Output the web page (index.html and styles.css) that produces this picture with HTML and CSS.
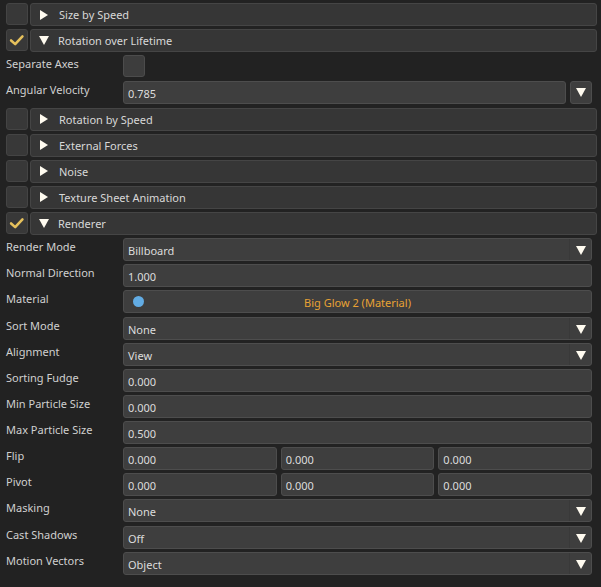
FILE: index.html
```html
<!DOCTYPE html>
<html lang="en">
<head>
    <meta charset="UTF-8">
    <title>Particle System</title>
    <link rel="stylesheet" href="styles.css">
</head>
<body>
    <div class="inspector">
        <div class="module">
            <span class="toggle"></span>
            <div class="module-bar"><span class="arrow-right"></span>Size by Speed</div>
        </div>
        <div class="module">
            <span class="toggle checked"><svg viewBox="0 0 22 22" width="22" height="22"><path d="M4.5 11.5 L9 15.5 L17 7" fill="none" stroke="#e6c15c" stroke-width="2.8" stroke-linecap="round" stroke-linejoin="round"/></svg></span>
            <div class="module-bar"><span class="arrow-down"></span>Rotation over Lifetime</div>
        </div>
        <div class="prop">
            <label>Separate Axes</label>
            <span class="checkbox"></span>
        </div>
        <div class="prop">
            <label>Angular Velocity</label>
            <div class="field grow">0.785</div>
            <div class="field curve-btn"><span class="drop-arrow"></span></div>
        </div>
        <div class="module">
            <span class="toggle"></span>
            <div class="module-bar"><span class="arrow-right"></span>Rotation by Speed</div>
        </div>
        <div class="module">
            <span class="toggle"></span>
            <div class="module-bar"><span class="arrow-right"></span>External Forces</div>
        </div>
        <div class="module">
            <span class="toggle"></span>
            <div class="module-bar"><span class="arrow-right"></span>Noise</div>
        </div>
        <div class="module">
            <span class="toggle"></span>
            <div class="module-bar"><span class="arrow-right"></span>Texture Sheet Animation</div>
        </div>
        <div class="module">
            <span class="toggle checked"><svg viewBox="0 0 22 22" width="22" height="22"><path d="M4.5 11.5 L9 15.5 L17 7" fill="none" stroke="#e6c15c" stroke-width="2.8" stroke-linecap="round" stroke-linejoin="round"/></svg></span>
            <div class="module-bar"><span class="arrow-down"></span>Renderer</div>
        </div>
        <div class="prop">
            <label>Render Mode</label>
            <div class="field dropdown">Billboard<span class="drop-arrow"></span></div>
        </div>
        <div class="prop">
            <label>Normal Direction</label>
            <div class="field grow">1.000</div>
        </div>
        <div class="prop">
            <label>Material</label>
            <div class="field grow material"><span class="dot"></span>Big Glow 2 (Material)</div>
        </div>
        <div class="prop">
            <label>Sort Mode</label>
            <div class="field dropdown">None<span class="drop-arrow"></span></div>
        </div>
        <div class="prop">
            <label>Alignment</label>
            <div class="field dropdown">View<span class="drop-arrow"></span></div>
        </div>
        <div class="prop">
            <label>Sorting Fudge</label>
            <div class="field grow">0.000</div>
        </div>
        <div class="prop">
            <label>Min Particle Size</label>
            <div class="field grow">0.000</div>
        </div>
        <div class="prop">
            <label>Max Particle Size</label>
            <div class="field grow">0.500</div>
        </div>
        <div class="prop">
            <label>Flip</label>
            <div class="triple">
                <div class="field">0.000</div>
                <div class="field">0.000</div>
                <div class="field">0.000</div>
            </div>
        </div>
        <div class="prop">
            <label>Pivot</label>
            <div class="triple">
                <div class="field">0.000</div>
                <div class="field">0.000</div>
                <div class="field">0.000</div>
            </div>
        </div>
        <div class="prop">
            <label>Masking</label>
            <div class="field dropdown">None<span class="drop-arrow"></span></div>
        </div>
        <div class="prop">
            <label>Cast Shadows</label>
            <div class="field dropdown">Off<span class="drop-arrow"></span></div>
        </div>
        <div class="prop">
            <label>Motion Vectors</label>
            <div class="field dropdown">Object<span class="drop-arrow"></span></div>
        </div>
    </div>
</body>
</html>
```

FILE: styles.css
```css
body {
    margin: 0;
    background-color: #222222;
    color: #d4d4d4;
    font-family: "Noto Sans", "DejaVu Sans", sans-serif;
    font-size: 11px;
}

.inspector {
    display: flex;
    flex-direction: column;
    gap: 3.14px;
    padding: 3px 4px 0 6px;
}

/* Module headers */
.module {
    display: flex;
    gap: 2px;
    height: 23px;
}

.toggle {
    width: 22px;
    height: 22px;
    box-sizing: border-box;
    background: #383838;
    border: 1px solid #444;
    border-radius: 3px;
    display: flex;
    align-items: center;
    justify-content: center;
}

.toggle svg {
    display: block;
}

.module-bar {
    flex: 1;
    display: flex;
    align-items: center;
    box-sizing: border-box;
    background: #363636;
    border: 1px solid #454545;
    border-radius: 3px;
    padding-left: 9px;
    color: #d8d8d8;
}

.arrow-right {
    width: 0;
    height: 0;
    border-top: 5px solid transparent;
    border-bottom: 5px solid transparent;
    border-left: 8px solid #fffbf0;
    margin-right: 11px;
}

.arrow-down {
    width: 0;
    height: 0;
    border-left: 5px solid transparent;
    border-right: 5px solid transparent;
    border-top: 9px solid #fffbf0;
    margin-right: 9px;
    margin-left: -1px;
}

/* Property rows */
.prop {
    display: flex;
    gap: 4px;
    height: 23px;
    margin-right: 5px;
}

.prop label {
    width: 113px;
    flex-shrink: 0;
    line-height: 18px;
    color: #d0d0d0;
}

.checkbox {
    width: 22px;
    height: 22px;
    box-sizing: border-box;
    background: #3d3d3d;
    border: 1px solid #4c4c4c;
    border-radius: 3px;
}

.field {
    box-sizing: border-box;
    height: 23px;
    background: #3e3e3e;
    border: 1px solid #4d4d4d;
    border-radius: 3px;
    padding: 2px 4px 0;
    display: flex;
    align-items: center;
    color: #dcdcdc;
}

.grow {
    flex: 1;
}

.curve-btn {
    width: 22px;
    padding: 0;
    justify-content: center;
}

.dropdown {
    flex: 1;
    position: relative;
}

.dropdown .drop-arrow {
    position: absolute;
    right: 5px;
    top: 7px;
}

.dropdown::after {
    content: "";
    position: absolute;
    right: 21px;
    top: 0;
    bottom: 0;
    width: 1px;
    background: #393939;
}

.drop-arrow {
    width: 0;
    height: 0;
    border-left: 5px solid transparent;
    border-right: 5px solid transparent;
    border-top: 9px solid #fffbf0;
}

.material {
    position: relative;
    justify-content: center;
    color: #e8a234;
}

.dot {
    position: absolute;
    left: 9px;
    top: 5px;
    width: 11px;
    height: 11px;
    border-radius: 50%;
    background: #62ace4;
}

.triple {
    flex: 1;
    display: flex;
    gap: 4px;
}

.triple .field {
    flex: 1;
}
```
